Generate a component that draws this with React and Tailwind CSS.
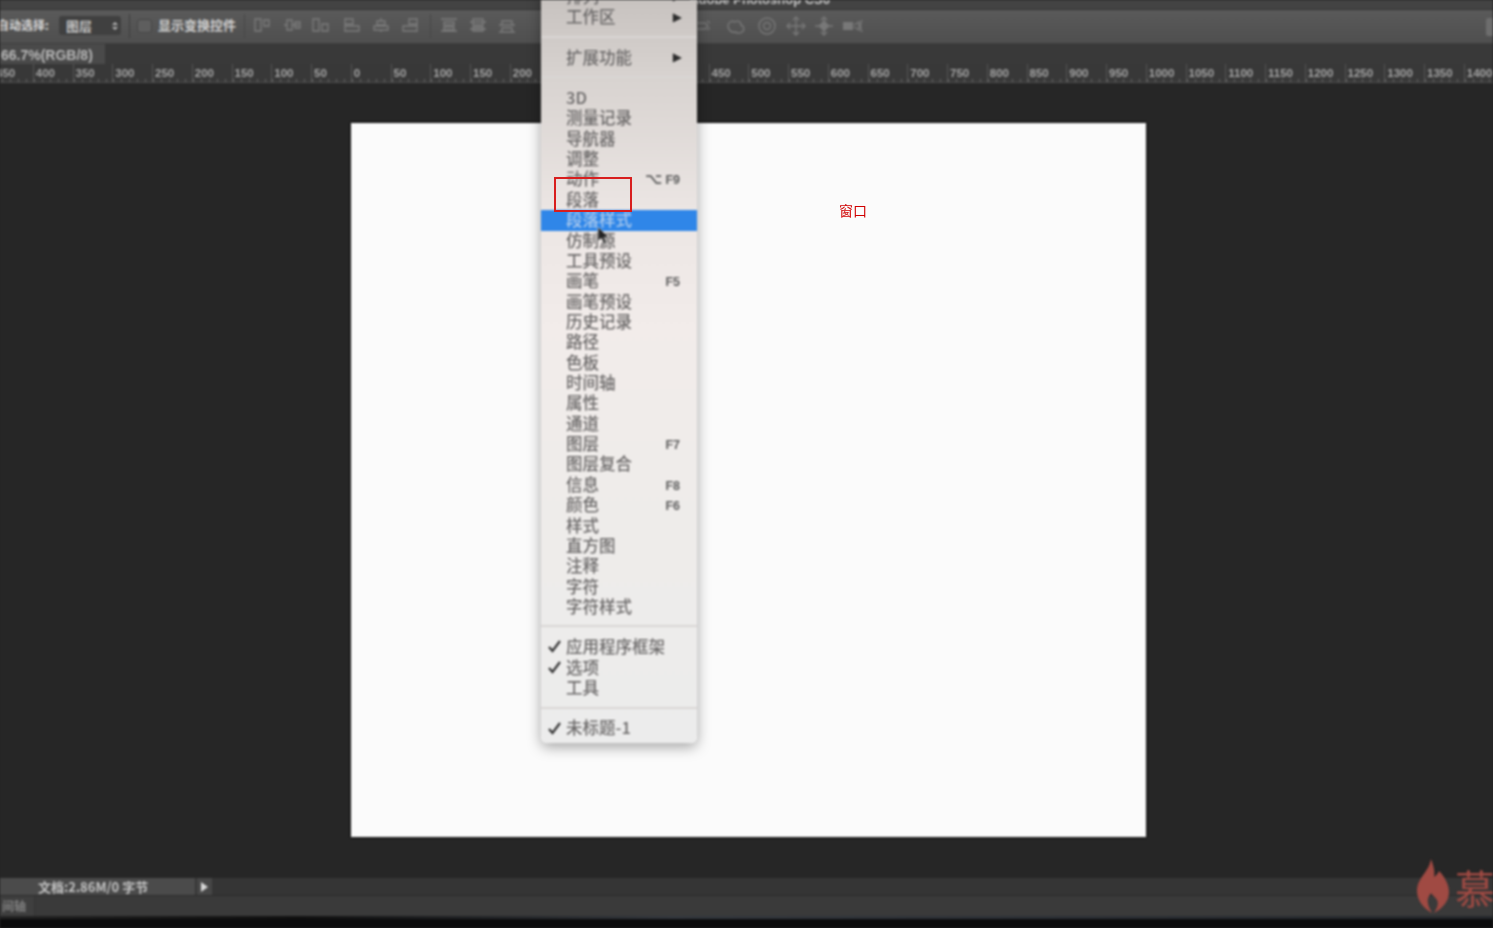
import React from "react";

const CJK = "font-['Noto_Sans_CJK_SC',sans-serif]";

const rulerValues = [];
for (let v = -450; v <= 1450; v += 50) rulerValues.push(Math.abs(v));

const toolIcons = [
  { x: 254, d: "M1 2h6v12H1zM10 3h5v6h-5z" },
  { x: 283, d: "M4 3h5v10H4zM9 8h7M12 5h5v6h-5zM1 8h3" },
  { x: 312, d: "M1 2h6v12H1zM10 7h6v7h-6z" },
  { x: 344, d: "M1 1v14M1 2h8v5H1zM1 9h14v5H1z" },
  { x: 373, d: "M8 1v3M4 4h8v4H4zM1 9h14v4H1zM8 13v2" },
  { x: 402, d: "M15 1v14M7 2h8v5H7zM1 9h14v5H1z" },
];

const toolIcons2 = [
  { x: 440, d: "M1 2h16M4 5h10v3H4zM1 14h16M4 10h10v3H4z" },
  { x: 469, d: "M1 5h16M4 2h10v6H4zM1 12h16M4 10h10v4H4z" },
  { x: 498, d: "M1 8h16M4 4h10v4H4zM1 15h16M4 11h10v4H4z" },
];

const menuGroups = [
  [{ t: "排列", arrow: true }, { t: "工作区", arrow: true }],
  [{ t: "扩展功能", arrow: true }],
  [
    { t: "3D" },
    { t: "测量记录" },
    { t: "导航器" },
    { t: "调整" },
    { t: "动作", key: "F9", alt: true },
    { t: "段落" },
    { t: "段落样式", active: true },
    { t: "仿制源" },
    { t: "工具预设" },
    { t: "画笔", key: "F5" },
    { t: "画笔预设" },
    { t: "历史记录" },
    { t: "路径" },
    { t: "色板" },
    { t: "时间轴" },
    { t: "属性" },
    { t: "通道" },
    { t: "图层", key: "F7" },
    { t: "图层复合" },
    { t: "信息", key: "F8" },
    { t: "颜色", key: "F6" },
    { t: "样式" },
    { t: "直方图" },
    { t: "注释" },
    { t: "字符" },
    { t: "字符样式" },
  ],
  [{ t: "应用程序框架", check: true }, { t: "选项", check: true }, { t: "工具" }],
  [{ t: "未标题-1", check: true }],
];

function ToolIcon({ x, d }) {
  return (
    <svg className="absolute top-[7px]" style={{ left: x }} width="18" height="17" viewBox="0 0 18 17" fill="none" stroke="#7c7c7c" strokeWidth="1.3">
      <path d={d} />
    </svg>
  );
}

function Check() {
  return (
    <svg className="absolute left-[6px] top-[2px]" width="15" height="14" viewBox="0 0 15 14" fill="none" stroke="#333" strokeWidth="2.2">
      <path d="M2 8l3.5 4L13 2" />
    </svg>
  );
}

function MenuRow({ item }) {
  return (
    <div className={`relative flex h-[20.36px] items-center pl-[25px] pr-[17px] leading-none ${item.active ? "bg-[#2f86e8] text-[#a9c9ee]" : "text-[#6c6a6a]"}`}>
      {item.check && <Check />}
      <span className={`flex-1 -translate-y-[1px] text-[16.5px] font-medium ${CJK}`}>{item.t}</span>
      {item.arrow && <span className="-translate-y-[1px] -translate-x-[-2px] font-['DejaVu_Sans',sans-serif] text-[12px] text-[#2c2c2c]">▶</span>}
      {item.alt && <span className="mr-[3px] font-['DejaVu_Sans',sans-serif] text-[15px] font-bold text-[#5c5c5c]">⌥</span>}
      {item.key && <span className="translate-y-[1px] font-['Liberation_Sans',sans-serif] text-[12.5px] font-bold text-[#5c5c5c]">{item.key}</span>}
    </div>
  );
}

function Menu() {
  return (
    <div className="absolute left-[541px] top-[-13px] w-[156px] rounded-b-[6px] bg-[linear-gradient(180deg,#c5c0bd_0%,#d8d3d0_12%,#ece6e4_30%,#f2ecea_45%,#efecea_65%,#ececec_100%)] pb-[4px] shadow-[0_4px_14px_rgba(0,0,0,0.35)]">
      {menuGroups.map((group, i) => (
        <div key={i}>
          {i > 0 && (
            <div className="flex h-[20px] -translate-y-[1px] items-center">
              <div className="h-[2px] w-full bg-[#d9d6d4]" />
            </div>
          )}
          {group.map((item) => (
            <MenuRow key={item.t} item={item} />
          ))}
        </div>
      ))}
    </div>
  );
}

export default function App() {
  return (
    <div className="relative h-screen w-full overflow-hidden bg-[#262626]">
      <div className="relative flex h-full flex-col overflow-hidden blur-[0.8px]">
        {/* title strip */}
        <div className="flex h-[9px] shrink-0 items-end justify-start overflow-hidden bg-[#434343]">
          <div className="flex w-[830px] shrink-0 -translate-y-[3px] justify-end font-['Liberation_Sans',sans-serif] text-[13px] font-bold leading-none text-[#c8c8c8]">
            Adobe Photoshop CS6
          </div>
        </div>

        {/* options bar */}
        <div className="relative h-[34px] shrink-0 border-t border-[#333] bg-[linear-gradient(180deg,#5a5a5a,#4f4f4f)]">
          <div className="flex h-full items-center pb-[2px]">
            <span className={`ml-[-3px] w-[56px] -translate-y-[1px] text-[12px] font-bold text-[#d8d8d8] ${CJK}`}>自动选择:</span>
            <div className={`ml-[6px] flex h-[19px] w-[62px] items-center justify-between rounded-[3px] bg-[#404040] pl-[7px] pr-[3px] text-[13px] font-bold text-[#c4c4c4] ${CJK}`}>
              图层
              <span className="flex flex-col gap-[2px]">
                <span className="h-0 w-0 border-x-[3px] border-b-[3px] border-x-transparent border-b-[#bbb]" />
                <span className="h-0 w-0 border-x-[3px] border-t-[3px] border-x-transparent border-t-[#bbb]" />
              </span>
            </div>
            <div className="ml-[8px] h-[24px] w-px bg-[#3c3c3c]" />
            <div className="ml-[7px] h-[14px] w-[15px] rounded-[3px] border border-[#454545] bg-[#5e5e5e]" />
            <span className={`ml-[6px] -translate-y-[1px] text-[13px] font-bold text-[#d0d0d0] ${CJK}`}>显示变换控件</span>
            <div className="ml-[8px] h-[24px] w-px bg-[#464646]" />
            <div className="ml-[185px] h-[24px] w-px bg-[#464646]" />
          </div>
          {toolIcons.map((i) => (
            <ToolIcon key={i.x} {...i} />
          ))}
          {toolIcons2.map((i) => (
            <ToolIcon key={i.x} {...i} />
          ))}
          <svg className="absolute left-[697px] top-[5px]" width="170" height="22" viewBox="0 0 170 22" fill="none" stroke="#787878" strokeWidth="1.4">
            <path d="M0 8h8l3 3-3 3H0M10 6l3 2M10 15l3-2" />
            <path d="M31 11c0-4 4-6 7-4 3-2 6 0 6 3 3 1 4 5 1 7-2 2-5 1-7 0-3 1-7-2-7-6z" />
            <circle cx="70" cy="11" r="8" />
            <circle cx="70" cy="11" r="3.5" />
            <path d="M99 2v18M90 11h18M96 5l3-3 3 3M96 17l3 3 3-3M93 8l-3 3 3 3M105 8l3 3-3 3" />
            <path d="M127 2v5M127 15v5M118 11h5M131 11h5" />
            <path d="M124 5l3-3 3 3M124 17l3 3 3-3" />
            <rect x="123" y="7" width="8" height="8" fill="#787878" stroke="none" transform="rotate(45 127 11)" />
            <rect x="146" y="7" width="10" height="8" fill="#787878" stroke="none" />
            <path d="M157 10l5-3v8l-5-3M165 5c-2 4-2 8 0 12" />
          </svg>
          <div className="absolute left-[1486px] top-[8px] h-[18px] w-[10px] rounded-[2px] bg-[#6d6d6d]" />
        </div>

        {/* document tab */}
        <div className="flex h-[21px] shrink-0 border-t border-[#3e3e3e] bg-[#393939]">
          <div className="flex w-[105px] items-center bg-[#4a4a4a] pl-[1px] pt-[2px] font-['Liberation_Sans',sans-serif] text-[14px] font-bold text-[#b8b8b8]">
            66.7%(RGB/8)
          </div>
        </div>

        {/* ruler */}
        <div className="flex h-[19px] shrink-0 border-b border-[#4e4e4e] bg-[#383838] pl-0">
          <div className="ml-[-7px] flex">
            {rulerValues.map((v, i) => (
              <div key={i} className="flex h-full w-[39.75px] shrink-0 flex-col justify-between border-l border-[#555]">
                <span className="pl-[2px] pt-[3px] font-['Liberation_Sans',sans-serif] text-[11.5px] font-bold leading-[12px] text-[#a4a4a4]">{v}</span>
                <div className="h-[3px] w-full bg-[repeating-linear-gradient(90deg,#666_0,#666_1px,transparent_1px,transparent_7.95px)]" />
              </div>
            ))}
          </div>
        </div>

        {/* canvas */}
        <div className="min-h-0 flex-1 bg-[#262626] pl-[351px] pt-[40px]">
          <div className="h-[714px] w-[795px] bg-[#fbfbfb] shadow-[0_0_3px_#000]" />
        </div>

        {/* status bar */}
        <div className="flex h-[17px] shrink-0 items-stretch gap-[2px] bg-[#353535]">
          <div className={`flex w-[195px] items-center bg-[#4b4b4b] pl-[38px] text-[13px] font-bold text-[#c4c4c4] ${CJK}`}>文档:2.86M/0 字节</div>
          <div className="flex w-[15px] items-center justify-center bg-[#474747]">
            <span className="h-0 w-0 border-y-[5px] border-l-[7px] border-y-transparent border-l-[#d8d8d8]" />
          </div>
        </div>

        {/* timeline tab */}
        <div className="flex h-[21px] shrink-0 border-t border-[#2b2b2b] bg-[#3a3a3a]">
          <div className={`flex w-[35px] items-center overflow-hidden border-r border-[#333] bg-[#3f3f3f] pl-[2px] text-[12px] font-bold text-[#808080] ${CJK}`}>间轴</div>
        </div>

        {/* bottom edge */}
        <div className="h-[12px] shrink-0 bg-[#0b0b0c]">
          <div className="h-[3px] bg-[linear-gradient(90deg,#222,#111_20%,#33373d_45%,#2c3036_70%,#24272b)]" />
        </div>
      </div>

      <div className="absolute inset-0 overflow-hidden blur-[0.8px]">
        <Menu />
        {/* mouse pointer */}
        <svg className="absolute left-[597px] top-[227px]" width="13" height="18" viewBox="0 0 13 18">
          <path d="M1 0v14l3.5-3 2.5 6 2.5-1-2.5-5.5h5z" fill="#222" stroke="#ddd" strokeWidth="0.6" />
        </svg>
        {/* watermark */}
        <svg className="absolute left-[1416px] top-[858px]" width="34" height="56" viewBox="0 0 34 56">
          <path d="M15 1c3 8 4 13 3 18 3-2 4-4 5-6 6 6 10 14 10 21 0 9-6 16-15 21 3-5 5-9 3-13-2-3-4-4-6-7-2 3-4 6-3 10 0 3 2 6 4 10C7 50 1 42 1 33 1 20 13 14 15 1z" fill="#a04a43" />
        </svg>
        <span className={`absolute left-[1455px] top-[862px] whitespace-nowrap text-[40px] leading-[50px] text-[#a04a43] ${CJK}`}>慕课网</span>
      </div>

      {/* annotations */}
      <div className="absolute left-[554px] top-[177px] h-[35px] w-[78px] border-2 border-[#d81e1e]" />
      <span className={`absolute left-[839px] top-[202px] text-[14px] leading-[16px] text-[#d00000] ${CJK}`}>窗口</span>
    </div>
  );
}
